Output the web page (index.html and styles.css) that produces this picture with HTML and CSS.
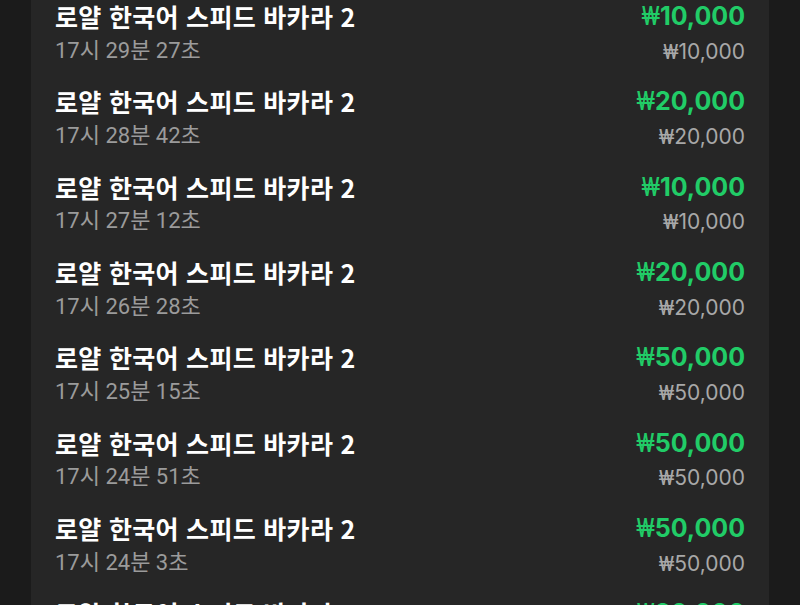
FILE: index.html
```html
<!DOCTYPE html>
<html lang="ko">
<head>
<meta charset="utf-8">
<link rel="stylesheet" href="styles.css">
</head>
<body>
<div class="panel">
  <div class="list">
    <div class="row">
      <div class="info"><div class="title">로얄 한국어 스피드 바카라 2</div><div class="time">17시 29분 27초</div></div>
      <div class="amounts"><div class="win"><span class="won">₩</span>10,000</div><div class="bet"><span class="won">₩</span>10,000</div></div>
    </div>
    <div class="row">
      <div class="info"><div class="title">로얄 한국어 스피드 바카라 2</div><div class="time">17시 28분 42초</div></div>
      <div class="amounts"><div class="win"><span class="won">₩</span>20,000</div><div class="bet"><span class="won">₩</span>20,000</div></div>
    </div>
    <div class="row">
      <div class="info"><div class="title">로얄 한국어 스피드 바카라 2</div><div class="time">17시 27분 12초</div></div>
      <div class="amounts"><div class="win"><span class="won">₩</span>10,000</div><div class="bet"><span class="won">₩</span>10,000</div></div>
    </div>
    <div class="row">
      <div class="info"><div class="title">로얄 한국어 스피드 바카라 2</div><div class="time">17시 26분 28초</div></div>
      <div class="amounts"><div class="win"><span class="won">₩</span>20,000</div><div class="bet"><span class="won">₩</span>20,000</div></div>
    </div>
    <div class="row">
      <div class="info"><div class="title">로얄 한국어 스피드 바카라 2</div><div class="time">17시 25분 15초</div></div>
      <div class="amounts"><div class="win"><span class="won">₩</span>50,000</div><div class="bet"><span class="won">₩</span>50,000</div></div>
    </div>
    <div class="row">
      <div class="info"><div class="title">로얄 한국어 스피드 바카라 2</div><div class="time">17시 24분 51초</div></div>
      <div class="amounts"><div class="win"><span class="won">₩</span>50,000</div><div class="bet"><span class="won">₩</span>50,000</div></div>
    </div>
    <div class="row">
      <div class="info"><div class="title">로얄 한국어 스피드 바카라 2</div><div class="time">17시 24분 3초</div></div>
      <div class="amounts"><div class="win"><span class="won">₩</span>50,000</div><div class="bet"><span class="won">₩</span>50,000</div></div>
    </div>
    <div class="row">
      <div class="info"><div class="title">로얄 한국어 스피드 바카라 2</div><div class="time">17시 23분 40초</div></div>
      <div class="amounts"><div class="win"><span class="won">₩</span>20,000</div><div class="bet"><span class="won">₩</span>20,000</div></div>
    </div>
  </div>
</div>
</body>
</html>
```
FILE: styles.css
```css
html, body {
  margin: 0;
  padding: 0;
  height: 100%;
  background: #1b1b1b;
  overflow: hidden;
}
.panel {
  margin: 0 31px;
  height: 100%;
  background: #262626;
  padding: 0 24px;
  box-sizing: border-box;
  overflow: hidden;
}
.list {
  margin-top: -10.5px;
}
.row {
  height: 85.333px;
  box-sizing: border-box;
  padding-top: 10.67px;
  display: flex;
  justify-content: space-between;
  align-items: flex-start;
}
.title {
  font-family: "Noto Sans CJK KR", sans-serif;
  font-weight: 700;
  font-size: 25px;
  line-height: 32px;
  letter-spacing: 0.3px;
  color: #ffffff;
}
.time {
  font-family: Roboto, "Noto Sans CJK KR", sans-serif;
  font-size: 22px;
  line-height: 34px;
  padding-top: 1.5px;
  color: #9b9b9b;
}
.amounts {
  text-align: right;
}
.win {
  font-family: Inter, "Noto Sans", sans-serif;
  font-weight: 700;
  font-size: 25px;
  line-height: 33px;
  color: #21cc67;
}
.bet {
  font-family: Inter, "Noto Sans", sans-serif;
  font-size: 21px;
  line-height: 34px;
  padding-top: 1.5px;
  color: #a8a8a8;
}
.won {
  font-family: Roboto, sans-serif;
  font-weight: 400;
}
```
